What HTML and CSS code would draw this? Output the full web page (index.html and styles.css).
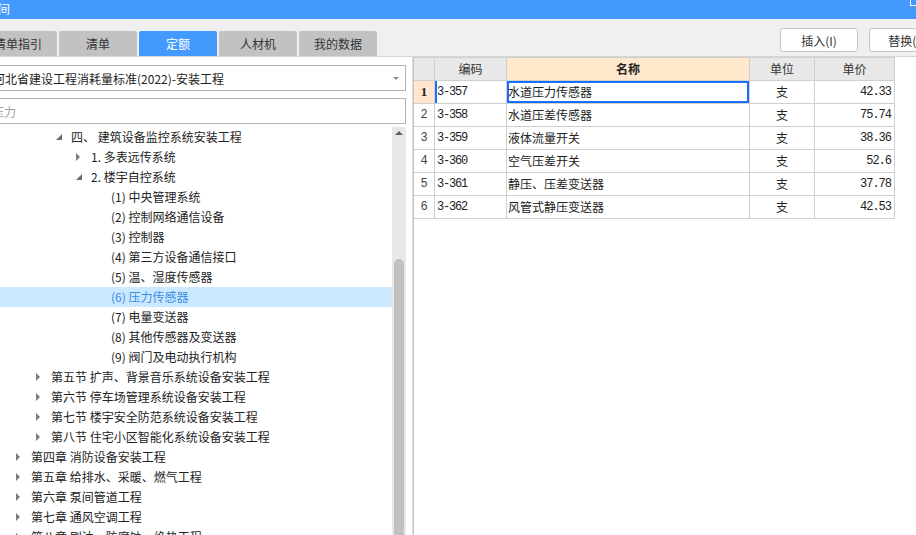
FILE: index.html
```html
<!DOCTYPE html>
<html lang="zh-CN">
<head>
<meta charset="utf-8">
<title>定额查询</title>
<link rel="stylesheet" href="styles.css">
</head>
<body>
<div class="window">
  <div class="titlebar">
    <span class="title">间</span>
    <span class="winbtn"></span>
  </div>
  <div class="toolbar">
    <div class="tabs">
      <div class="tab">清单指引</div>
      <div class="tab">清单</div>
      <div class="tab active">定额</div>
      <div class="tab">人材机</div>
      <div class="tab">我的数据</div>
    </div>
    <div class="actions">
      <button class="btn">插入(I)</button>
      <button class="btn">替换(R)</button>
    </div>
  </div>
  <div class="main">
    <div class="left">
      <div class="select"><span class="select-text">河北省建设工程消耗量标准(2022)-安装工程</span><i class="caret"></i></div>
      <div class="search"><span class="placeholder">压力</span></div>
      <div class="treewrap">
        <ul class="tree">
          <li class="row l2"><span class="tg open"></span><span>四、 建筑设备监控系统安装工程</span></li>
          <li class="row l3"><span class="tg closed"></span><span>1. 多表远传系统</span></li>
          <li class="row l3"><span class="tg open"></span><span>2. 楼宇自控系统</span></li>
          <li class="row l4"><span class="tg"></span><span>(1) 中央管理系统</span></li>
          <li class="row l4"><span class="tg"></span><span>(2) 控制网络通信设备</span></li>
          <li class="row l4"><span class="tg"></span><span>(3) 控制器</span></li>
          <li class="row l4"><span class="tg"></span><span>(4) 第三方设备通信接口</span></li>
          <li class="row l4"><span class="tg"></span><span>(5) 温、湿度传感器</span></li>
          <li class="row l4 selected"><span class="tg"></span><span>(6) 压力传感器</span></li>
          <li class="row l4"><span class="tg"></span><span>(7) 电量变送器</span></li>
          <li class="row l4"><span class="tg"></span><span>(8) 其他传感器及变送器</span></li>
          <li class="row l4"><span class="tg"></span><span>(9) 阀门及电动执行机构</span></li>
          <li class="row l1"><span class="tg closed"></span><span>第五节 扩声、背景音乐系统设备安装工程</span></li>
          <li class="row l1"><span class="tg closed"></span><span>第六节 停车场管理系统设备安装工程</span></li>
          <li class="row l1"><span class="tg closed"></span><span>第七节 楼宇安全防范系统设备安装工程</span></li>
          <li class="row l1"><span class="tg closed"></span><span>第八节 住宅小区智能化系统设备安装工程</span></li>
          <li class="row l0"><span class="tg closed"></span><span>第四章 消防设备安装工程</span></li>
          <li class="row l0"><span class="tg closed"></span><span>第五章 给排水、采暖、燃气工程</span></li>
          <li class="row l0"><span class="tg closed"></span><span>第六章 泵间管道工程</span></li>
          <li class="row l0"><span class="tg closed"></span><span>第七章 通风空调工程</span></li>
          <li class="row l0"><span class="tg closed"></span><span>第八章 刷油、防腐蚀、绝热工程</span></li>
        </ul>
        <div class="vscroll">
          <div class="arrow-up"></div>
          <div class="thumb"></div>
        </div>
      </div>
    </div>
    <div class="right">
      <div class="grid">
        <div class="c hd"></div>
        <div class="c hd center">编码</div>
        <div class="c hd center name-hd">名称</div>
        <div class="c hd center">单位</div>
        <div class="c hd center">单价</div>

        <div class="c num cur">1</div>
        <div class="c code curcode">3-357</div>
        <div class="c name sel">水道压力传感器</div>
        <div class="c center">支</div>
        <div class="c price">42.33</div>

        <div class="c num">2</div>
        <div class="c code">3-358</div>
        <div class="c name">水道压差传感器</div>
        <div class="c center">支</div>
        <div class="c price">75.74</div>

        <div class="c num">3</div>
        <div class="c code">3-359</div>
        <div class="c name">液体流量开关</div>
        <div class="c center">支</div>
        <div class="c price">38.36</div>

        <div class="c num">4</div>
        <div class="c code">3-360</div>
        <div class="c name">空气压差开关</div>
        <div class="c center">支</div>
        <div class="c price">52.6</div>

        <div class="c num">5</div>
        <div class="c code">3-361</div>
        <div class="c name">静压、压差变送器</div>
        <div class="c center">支</div>
        <div class="c price">37.78</div>

        <div class="c num">6</div>
        <div class="c code">3-362</div>
        <div class="c name">风管式静压变送器</div>
        <div class="c center">支</div>
        <div class="c price">42.53</div>
      </div>
    </div>
  </div>
</div>
</body>
</html>
```
FILE: styles.css
```css
* { box-sizing: border-box; }
html, body { margin: 0; padding: 0; }
body {
  width: 916px;
  height: 535px;
  overflow: hidden;
  font-family: "Noto Sans CJK SC", "Noto Sans", sans-serif;
  font-size: 12px;
  color: #222;
  background: #fff;
}
.window { width: 916px; height: 535px; display: flex; flex-direction: column; overflow: hidden; }

.titlebar {
  height: 19px;
  flex: none;
  background: #4499ff;
  display: flex;
  justify-content: space-between;
  align-items: flex-start;
  overflow: hidden;
}
.title { color: #fff; font-size: 12px; line-height: 17px; margin-left: -2px; }
.winbtn {
  width: 9px; height: 8px;
  margin-top: -2px; margin-right: -3px;
  border: 1.5px solid #fff;
}

.toolbar {
  height: 37px;
  flex: none;
  background: #f0f0f0;
  display: flex;
  align-items: flex-start;
  overflow: hidden;
}
.tabs { display: flex; gap: 2px; margin-top: 12px; margin-left: -21px; flex: none; }
.tab {
  width: 78px; height: 25px;
  background: #c2c2c2;
  border-radius: 2px 2px 0 0;
  color: #333;
  text-align: center;
  line-height: 25px;
  font-size: 12px;
}
.tab.active { background: #4499ff; color: #fff; }
.actions { display: flex; gap: 11px; margin-left: 403px; margin-top: 9px; flex: none; }
.btn {
  width: 78px; height: 24px;
  background: #fff;
  border: 1px solid #c6c6c6;
  border-radius: 3px;
  font-family: inherit;
  font-size: 12px;
  color: #333;
  padding: 0;
}

.main {
  flex: 1;
  display: flex;
  border-top: 1px solid #d6d6d6;
  overflow: hidden;
}
.left {
  width: 413px;
  flex: none;
  border-right: 1px solid #dadada;
  background: #fff;
  display: flex;
  flex-direction: column;
  overflow: hidden;
}
.select {
  height: 26px;
  margin: 8px 6px 0 -14px;
  border: 1px solid #b4b4b4;
  display: flex;
  align-items: center;
  padding-left: 6px;
  padding-right: 6px;
}
.select-text { flex: 1; font-size: 12px; color: #222; white-space: nowrap; }
.caret {
  width: 0; height: 0;
  border-left: 3px solid transparent;
  border-right: 3px solid transparent;
  border-top: 3px solid #8a8a8a;
}
.search {
  height: 26px;
  margin: 7px 6px 0 -14px;
  border: 1px solid #b4b4b4;
  display: flex;
  align-items: center;
  padding-left: 5px;
}
.placeholder { color: #a0a0a0; font-size: 12px; }

.treewrap { flex: 1; display: flex; margin-top: 3px; overflow: hidden; }
.tree { list-style: none; margin: 0; padding: 0; width: 392px; flex: none; }
.row {
  height: 20px;
  line-height: 20px;
  display: flex;
  align-items: center;
  white-space: nowrap;
  color: #222;
}
.row.l0 { padding-left: 15px; }
.row.l1 { padding-left: 35px; }
.row.l2 { padding-left: 55px; }
.row.l3 { padding-left: 75px; }
.row.l4 { padding-left: 95px; }
.tg { width: 16px; height: 20px; flex: none; position: relative; }
.tg.closed::before {
  content: "";
  position: absolute;
  left: 1px; top: 6px;
  border-top: 4px solid transparent;
  border-bottom: 4px solid transparent;
  border-left: 4px solid #7a7a7a;
}
.tg.open::before {
  content: "";
  position: absolute;
  left: 1px; top: 7px;
  border-left: 6px solid transparent;
  border-bottom: 6px solid #6e6e6e;
}
.row.selected { background: #cce8ff; color: #3a8ee6; }

.vscroll {
  width: 14px;
  flex: none;
  background: #e8e8e8;
  position: relative;
  overflow: hidden;
}
.arrow-up {
  width: 0; height: 0;
  margin: 4px 0 0 3px;
  border-left: 4px solid transparent;
  border-right: 4px solid transparent;
  border-bottom: 4px solid #606060;
}
.thumb {
  width: 10px;
  height: 320px;
  margin: 124px 0 0 2px;
  background: #c1c1c1;
  border-radius: 5px 5px 0 0;
}

.right {
  flex: 1;
  background: #fff;
  border-left: 1px solid #c8c8c8;
  overflow: hidden;
}
.grid {
  display: grid;
  grid-template-columns: 21px 72px 243px 65px 80px;
  grid-auto-rows: 23px;
  width: 481px;
  border-top: 1px solid #cdcdcd;
}
.c {
  border-right: 1px solid #cfcfcf;
  border-bottom: 1px solid #cfcfcf;
  line-height: 22px;
  font-size: 12px;
  white-space: nowrap;
  overflow: hidden;
  color: #222;
}
.hd { background: #e8e8e8; color: #333; }
.name-hd { background: #ffe8cc; font-weight: bold; color: #222; }
.center { text-align: center; }
.num {
  text-align: center;
  font-family: "Liberation Mono", monospace;
  font-size: 12px;
  color: #444;
}
.num.cur {
  background: #ffe6cc;
  font-family: "Liberation Serif", serif;
  font-weight: bold;
  font-size: 13px;
  color: #222;
}
.code {
  padding-left: 2px;
  font-family: "Liberation Mono", monospace;
  font-size: 12px;
  letter-spacing: -1.2px;
}
.curcode { box-shadow: inset 2px 0 0 #1a6fff; }
.name { padding-left: 1px; }
.sel { box-shadow: inset 0 0 0 2px #1a6fff; }
.price {
  text-align: right;
  padding-right: 3px;
  font-family: "Liberation Mono", monospace;
  font-size: 12px;
  letter-spacing: -1px;
}
```
